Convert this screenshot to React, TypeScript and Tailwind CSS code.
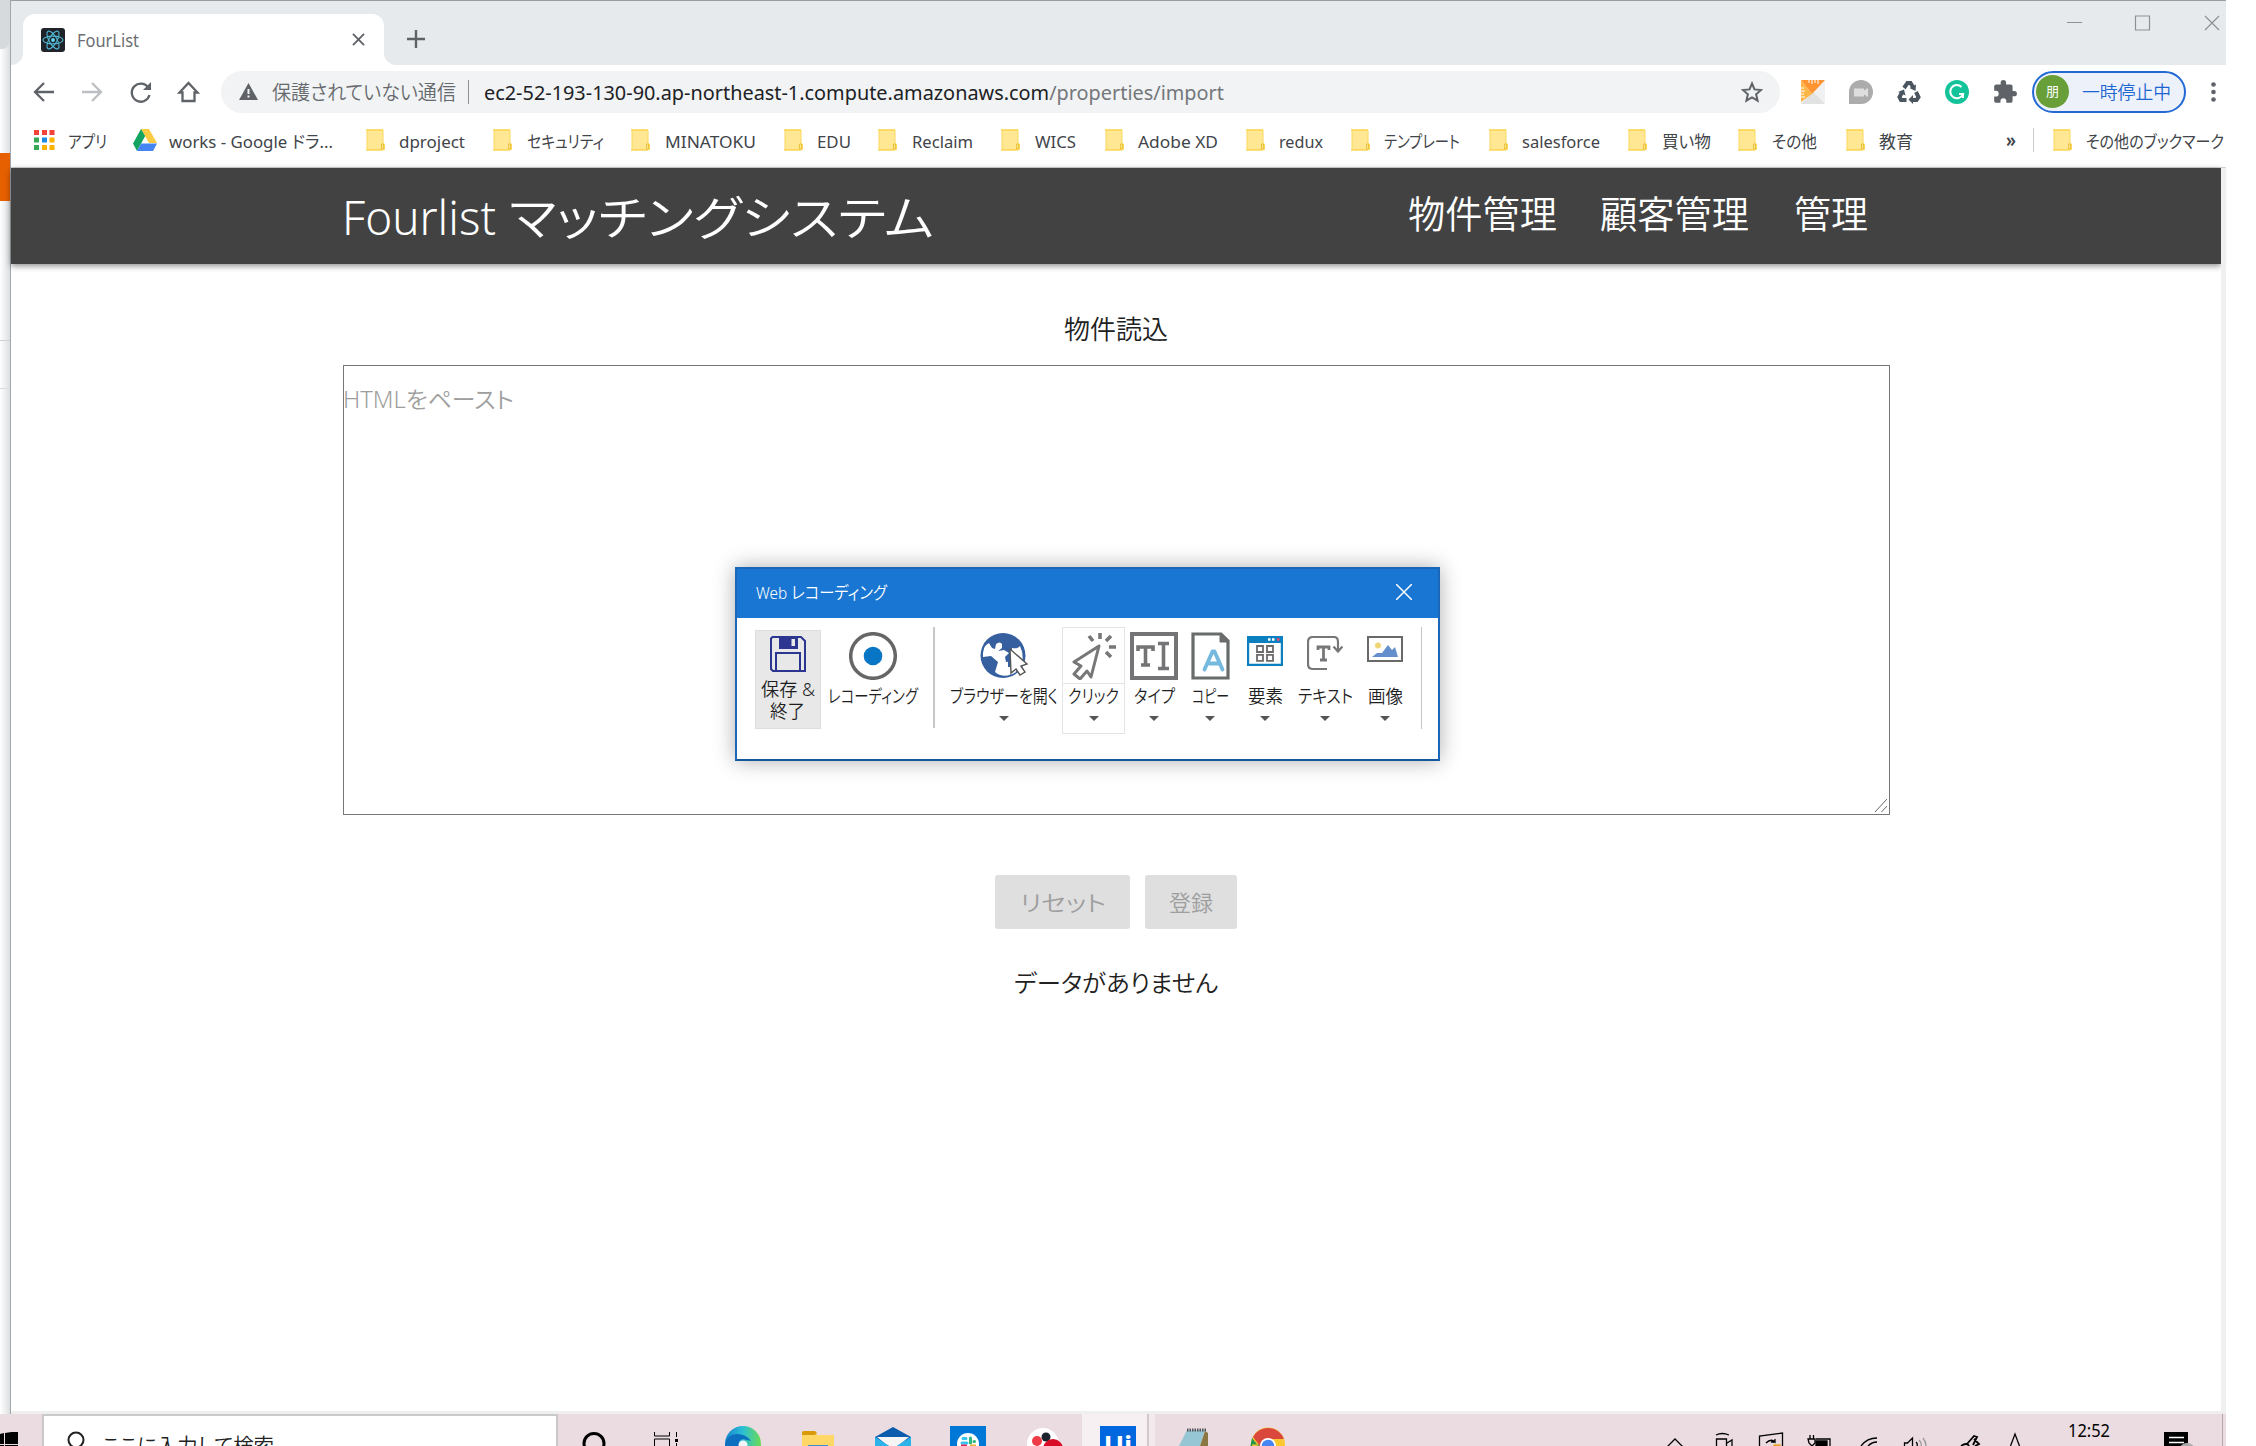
import React, { useLayoutEffect, useRef } from "react";

/* Text condensed or stretched to the width of its box. */
function T({ className = "", children }: { className?: string; children: React.ReactNode }) {
  const box = useRef<HTMLSpanElement>(null);
  const ink = useRef<HTMLSpanElement>(null);
  useLayoutEffect(() => {
    const b = box.current, i = ink.current;
    if (b && i && i.offsetWidth > 0) i.style.transform = `scaleX(${b.clientWidth / i.getBoundingClientRect().width})`;
  }, []);
  return (
    <span ref={box} className={`block shrink-0 whitespace-nowrap leading-none ${className}`}>
      <span ref={ink} className="inline-block origin-left">{children}</span>
    </span>
  );
}

const Folder = () => (
  <svg className="h-[22px] w-[19px] shrink-0" viewBox="0 0 19 22">
    <path d="M1 1h16v13l1.500 1v5.500h-17.500z" fill="#ffe793" stroke="#fbd85c" strokeWidth="1" />
    <path d="M0 1h17M0 21h17" stroke="#fbd85c" strokeWidth="1.500" />
    <path d="M15.500 20v-5h2v5z" fill="#ffe793" stroke="#ecc23c" strokeWidth="1" />
  </svg>
);

const bookmarks = [
  { label: "dproject", m: "ml-[33px]", w: "w-[66px]", g: "ml-[14px]" },
  { label: "セキュリティ", m: "ml-[28px]", w: "w-[77px]", g: "ml-[15px]" },
  { label: "MINATOKU", m: "ml-[27px]", w: "w-[91px]", g: "ml-[15px]" },
  { label: "EDU", m: "ml-[28px]", w: "w-[34px]", g: "ml-[14px]" },
  { label: "Reclaim", m: "ml-[27px]", w: "w-[61px]", g: "ml-[15px]" },
  { label: "WICS", m: "ml-[28px]", w: "w-[41px]", g: "ml-[15px]" },
  { label: "Adobe XD", m: "ml-[29px]", w: "w-[80px]", g: "ml-[14px]" },
  { label: "redux", m: "ml-[28px]", w: "w-[44px]", g: "ml-[14px]" },
  { label: "テンプレート", m: "ml-[28px]", w: "w-[76px]", g: "ml-[14px]" },
  { label: "salesforce", m: "ml-[29px]", w: "w-[78px]", g: "ml-[14px]" },
  { label: "買い物", m: "ml-[28px]", w: "w-[49px]", g: "ml-[15px]" },
  { label: "その他", m: "ml-[27px]", w: "w-[45px]", g: "ml-[15px]" },
  { label: "教育", m: "ml-[29px]", w: "w-[34px]", g: "ml-[14px]" },
];

function TabStrip() {
  return (
    <div className="flex h-[65px] border-t border-[#9a9da1] bg-[#e6eaed]">
      <div className="relative ml-3 mt-[13px] flex h-[51px] w-[361px] items-center rounded-t-[12px] bg-white">
        <svg className="absolute -left-3 bottom-0 h-3 w-3" viewBox="0 0 12 12"><path d="M12 0v12H0A12 12 0 0 0 12 0" fill="#fff" /></svg>
        <svg className="absolute -right-3 bottom-0 h-3 w-3" viewBox="0 0 12 12"><path d="M0 0v12h12A12 12 0 0 1 0 0" fill="#fff" /></svg>
        <svg className="ml-[18px] h-6 w-6" viewBox="0 0 24 24" fill="none" stroke="#4fb8d3" strokeWidth="1.100">
          <rect width="24" height="24" rx="3" fill="#20232a" stroke="none" />
          <ellipse cx="12" cy="12" rx="10" ry="3.900" />
          <ellipse cx="12" cy="12" rx="10" ry="3.900" transform="rotate(60 12 12)" />
          <ellipse cx="12" cy="12" rx="10" ry="3.900" transform="rotate(120 12 12)" />
          <circle cx="12" cy="12" r="1.900" fill="#61dafb" stroke="none" />
        </svg>
        <T className="ml-3 mt-[1px] w-[62px] text-[18px] text-[#6b6e72]">FourList</T>
        <svg className="ml-[213px] h-[13px] w-[13px]" viewBox="0 0 14 14" stroke="#5f6368" strokeWidth="2"><path d="M1 1l12 12M13 1L1 13" /></svg>
      </div>
      <svg className="ml-[23px] mt-[29px] h-[18px] w-[18px]" viewBox="0 0 18 18" stroke="#5f6368" strokeWidth="2.400"><path d="M9 0v18M0 9h18" /></svg>
      <svg className="ml-auto mt-[14px] h-4 w-[154px]" viewBox="0 0 154 16" fill="none" stroke="#8e9194" strokeWidth="1.200">
        <path d="M0 7.500h15M138 1l14 14M152 1l-14 14" /><path d="M68.500 1h14v14h-14z" />
      </svg>
      <div className="w-[5px]" />
    </div>
  );
}

function Toolbar() {
  return (
    <div className="flex h-[53px] items-center bg-white pl-[22px]">
      <svg className="h-6 w-[168px] shrink-0" viewBox="0 0 168 24" fill="none" strokeWidth="2.300">
        <path d="M21 12H2M11 3l-9 9 9 9" stroke="#5f6368" />
        <path d="M49 12h19M59 3l9 9-9 9" stroke="#bcbec1" />
        <path d="M115.500 8A9 9 0 1 0 116.500 15" stroke="#5f6368" />
        <path d="M118 2v8h-8z" fill="#5f6368" />
        <path d="M149.500 12.500h-3L155.500 3l9 9.500h-3V21h-12z" stroke="#5f6368" />
      </svg>
      <div className="ml-5 flex h-[42px] w-[1559px] shrink-0 items-center rounded-full bg-[#f1f3f4]">
        <svg className="ml-[18px] h-[17px] w-[19px]" viewBox="0 0 19 17"><path d="M9.500 0L19 17H0z" fill="#5f6368" /><path d="M9.500 6v5M9.500 12.500v2" stroke="#f1f3f4" strokeWidth="2" /></svg>
        <T className="ml-[14px] mt-[2px] w-[184px] text-[20px] font-[350] text-[#66696d]">保護されていない通信</T>
        <div className="ml-[12px] h-6 w-px bg-[#8d9195]" />
        <T className="ml-[15px] mt-[2px] w-[740px] text-[20px] text-[#202124]">ec2-52-193-130-90.ap-northeast-1.compute.amazonaws.com<span className="text-[#74777b]">/properties/import</span></T>
        <svg className="ml-[517px] h-[22px] w-[22px]" viewBox="0 0 22 22" fill="none" stroke="#5f6368" strokeWidth="2"><path d="M11 2.500l2.500 5.900 6.500.6-4.900 4.300 1.500 6.300L11 16.300l-5.600 3.300 1.500-6.300L2 9l6.500-.6z" /></svg>
      </div>
      <svg className="ml-[21px] h-6 w-6 shrink-0" viewBox="0 0 24 24">
        <path d="M2 0h20l2 2v20l-2 2H0V2z" fill="#f1f1f1" /><path d="M12 12L24 24H0z" fill="#e2e2e2" />
        <path d="M0 0h24L11 14z" fill="#ff9431" /><path d="M0 0l11 14L0 22z" fill="#ffb649" />
        <path d="M8 0v3M11 0v4M14 0v3M17 0v4M0 8h3M0 11h4M0 14h3M0 17h4" stroke="#fff" />
      </svg>
      <svg className="ml-6 h-6 w-6 shrink-0" viewBox="0 0 24 24"><path d="M12 0a12 12 0 1 1 0 24H0V12A12 12 0 0 1 12 0" fill="#acacac" /><path d="M5 8.500h10v2l4-2.500v9l-4-2.500v2H5z" fill="#dedede" /></svg>
      <svg className="ml-6 h-6 w-6 shrink-0" viewBox="0 0 24 24" fill="none" stroke="#4b5560" strokeWidth="4">
        <path d="M7 8l3.500-5h3L16 7" /><path d="M19 12l2.500 5-2 3h-5" /><path d="M9.500 20H4l-1.500-3L5 12.500" />
        <path d="M19 4.500L18.500 11 12.500 8z M16 15v9l-4.500-4.500z M1 12l6-2.500 1.500 6z" fill="#4b5560" stroke="none" />
      </svg>
      <svg className="ml-6 h-6 w-6 shrink-0" viewBox="0 0 24 24" fill="none"><circle cx="12" cy="12" r="12" fill="#15c39a" /><path d="M16.500 7A6.600 6.600 0 1 0 18 14h-4M18 13.500V18" stroke="#fff" strokeWidth="2" /></svg>
      <svg className="ml-[23px] h-[26px] w-[26px] shrink-0" viewBox="0 0 24 24" fill="#5f6368"><path d="M20.500 11H19V7a2 2 0 0 0-2-2h-4V3.500a2.500 2.500 0 0 0-5 0V5H4a2 2 0 0 0-2 2v3.800h1.500a2.700 2.700 0 0 1 0 5.400H2V20a2 2 0 0 0 2 2h3.800v-1.500a2.700 2.700 0 0 1 5.400 0V22H17a2 2 0 0 0 2-2v-4h1.500a2.500 2.500 0 0 0 0-5" /></svg>
      <div className="ml-[14px] flex h-[42px] w-[154px] shrink-0 items-center rounded-full border-2 border-[#2369d4] bg-[#edf1fa]">
        <div className="ml-[2px] flex h-[33px] w-[33px] items-center justify-center rounded-full bg-[#689f38] text-[13px] leading-none text-white">朋</div>
        <T className="ml-[13px] mt-px w-[89px] text-[18px] font-[350] text-[#1b66d0]">一時停止中</T>
      </div>
      <svg className="ml-[25px] h-5 w-[5px] shrink-0" viewBox="0 0 5 20" fill="#5f6368"><circle cx="2.500" cy="2.500" r="2.300" /><circle cx="2.500" cy="10" r="2.300" /><circle cx="2.500" cy="17.500" r="2.300" /></svg>
    </div>
  );
}

function Bookmarks() {
  return (
    <div className="flex h-[50px] items-center border-b border-[#d4d6d8] bg-white pb-[5px] pl-[23px] text-[17px] text-[#414449]">
      <svg className="h-5 w-[21px] shrink-0" viewBox="0 0 21 20">
        <path d="M0 0h5v5H0zM8 0h5v5H8zM15.500 0h5v5h-5z" fill="#f44336" />
        <path d="M0 7.500h5v5H0z" fill="#34a853" /><path d="M8 7.500h5v5H8z" fill="#1e88e5" /><path d="M15.500 7.500h5v5h-5zM8 15h5v5H8zM15.500 15h5v5h-5z" fill="#fbb300" />
        <path d="M0 15h5v5H0z" fill="#34a853" />
      </svg>
      <T className="ml-[13px] mt-[3px] w-[39px]">アプリ</T>
      <svg className="ml-[26px] h-[22px] w-6 shrink-0" viewBox="0 0 24 22"><path d="M8 0h8l8 14h-8z" fill="#fbcb44" /><path d="M8 0l4.200 7L4 22 0 14.500z" fill="#12a460" /><path d="M8.200 14.500H24L20 22H4z" fill="#4584f3" /></svg>
      <T className="ml-[12px] mt-[3px] w-[164px]">works - Google ドラ...</T>
      {bookmarks.map((b) => (
        <div key={b.label} className={`flex items-center ${b.m}`}>
          <Folder />
          <T className={`mt-[3px] ${b.g} ${b.w}`}>{b.label}</T>
        </div>
      ))}
      <T className="ml-auto w-[10px] text-[20px] font-semibold">»</T>
      <div className="ml-[17px] h-6 w-px bg-[#c9cbce]" />
      <div className="ml-[19px] flex items-center"><Folder /><T className="ml-[14px] mr-[2px] mt-[3px] w-[138px]">その他のブックマーク</T></div>
    </div>
  );
}

function ToolButton({ box, label, text, children, arrow = true }: { box: string; label: string; text: string; children: React.ReactNode; arrow?: boolean }) {
  return (
    <div className={`flex shrink-0 flex-col items-center pt-[14px] ${box}`}>
      <div className="flex h-12 items-start justify-center">{children}</div>
      <T className={`mt-[7px] text-[18px] ${label}`}>{text}</T>
      {arrow && <svg className="mt-[11px] h-[5px] w-[10px]" viewBox="0 0 10 5"><path d="M0 0h10L5 5z" fill="#555" /></svg>}
    </div>
  );
}

function Recorder() {
  return (
    <section className="absolute left-[724px] top-[399px] flex h-[194px] w-[705px] flex-col border-2 border-[#1a66b8] border-b-[#15569c] bg-white font-[350] text-[#1f1f1f] shadow-[0_0_20px_rgba(0,0,0,0.32)]">
      <div className="flex h-[49px] shrink-0 items-center bg-[#1976d2] pb-[3px]">
        <T className="ml-[19px] w-[131px] text-[17px] text-white">Web レコーディング</T>
        <svg className="ml-auto mr-[26px] h-4 w-4" viewBox="0 0 16 16" stroke="#fff" strokeWidth="1.500"><path d="M0 0l16 16M16 0L0 16" /></svg>
      </div>
      <div className="flex items-start">
        <div className="ml-[18px] mt-[12px] flex h-[99px] w-[66px] shrink-0 flex-col items-center border border-[#dedede] bg-[#e8e8e8] pr-px pt-[5px]">
          <svg className="h-9 w-9" viewBox="0 0 36 36" fill="none" stroke="#2c3691" strokeWidth="2">
            <path d="M2.500 1H31l4 4v30H3l-2-2V2.500z" /><path d="M10 1h17v11H10z" fill="#2c3691" /><path d="M21.500 3h3.500v7h-3.500z" fill="#e8e8e8" stroke="none" /><path d="M6 35V17h24v18" />
          </svg>
          <T className="mt-[8px] w-[54px] text-[18px]">保存 &amp;</T>
          <T className="mt-[4px] w-[35px] text-[18px]">終了</T>
        </div>
        <ToolButton box="ml-[6px] w-[92px]" label="w-[90px]" text="レコーディング" arrow={false}>
          <svg className="h-12 w-12" viewBox="0 0 48 48"><circle cx="24" cy="24" r="22.300" fill="none" stroke="#666" strokeWidth="3.500" /><circle cx="24" cy="24" r="9.300" fill="#0876c4" /></svg>
        </ToolButton>
        <div className="ml-[14px] mt-[9px] h-[101px] w-[2px] bg-[#c8c8c8]" />
        <ToolButton box="ml-[13px] w-[112px]" label="w-[108px]" text="ブラウザーを開く">
          <svg className="h-12 w-[50px]" viewBox="0 0 50 48">
            <circle cx="24" cy="23.500" r="22.500" fill="#355f9f" />
            <path d="M4 21q1-8 6-10l3 5 3 1 1-5q4-3 6 0v4l-4 3 6-1 5 3-4 4 1 5 8-1 1 12-8 3q-8 0-12-4l3-10-7-6-8 1z" fill="#fff" />
            <path d="M33 16q6 1 8-2 4 8 2 18l-7 9-4-4z" fill="#fff" />
            <path d="M29 22h4v13h-4z" fill="#355f9f" />
            <path d="M4 30l5 9q14 11 29 0l3-4q-6 9-17 9T4 30" fill="#355f9f" />
            <path d="M31 17l1 24 5-4 4 6 5-3-4-6 6-2z" fill="#fff" stroke="#555" strokeWidth="1.400" />
          </svg>
        </ToolButton>
        <div className="relative ml-[2px] mt-[9px] h-[107px] w-[63px] shrink-0 border border-[#e4e4e4]">
          <div className="absolute left-0 top-[55px] h-px w-full bg-[#e4e4e4]" />
          <ToolButton box="-mt-[10px] w-[61px]" label="w-[51px]" text="クリック">
            <svg className="h-12 w-[46px]" viewBox="0 0 46 48" fill="none" stroke="#777" strokeWidth="3">
              <path d="M28 14L3 30l7 4-7 8 6 5 7-8 4 6z" strokeLinejoin="round" /><path d="M29 1v6M18 4l4 5M40 4l-5 5M38 15h7M35 20l5 5" strokeWidth="3.600" />
            </svg>
          </ToolButton>
        </div>
        <ToolButton box="ml-[5px] w-[48px]" label="w-[41px]" text="タイプ">
          <svg className="h-12 w-12" viewBox="0 0 48 48" fill="none" stroke="#747477">
            <path d="M2 2h44v44H2z" strokeWidth="4" /><path d="M8 19v-4h15v4M15.500 15v18M11 33h9M28 11.500h11M28 36.500h11M33.500 12v24" strokeWidth="3.600" />
          </svg>
        </ToolButton>
        <ToolButton box="ml-[12px] w-[40px]" label="w-[37px]" text="コピー">
          <svg className="h-12 w-[39px]" viewBox="0 0 39 48" fill="none" stroke="#686c6a" strokeWidth="3.200">
            <path d="M2 2h28l7 7v37H2z" /><path d="M29 1v9h9z" fill="#686c6a" strokeWidth="1" />
            <path d="M13.500 37.500l8-18h2l8 18M17 31.500h11" stroke="#75b9df" strokeWidth="3.800" strokeLinecap="round" strokeLinejoin="round" />
          </svg>
        </ToolButton>
        <ToolButton box="ml-[15px] w-[40px]" label="w-[35px]" text="要素">
          <svg className="mt-1 h-[30px] w-9" viewBox="0 0 36 30" fill="none">
            <path d="M1 1h34v28H1z" fill="#fff" stroke="#0c80bf" strokeWidth="2.400" /><path d="M0 0h36v7H0z" fill="#0c80bf" />
            <path d="M21 3.500h2.500M25 3.500h2.500" stroke="#fff" strokeWidth="2.500" /><path d="M30 3.500h2.500" stroke="#f2486a" strokeWidth="2.500" />
            <path d="M10 10h6v6h-6zM20 10h6v6h-6zM10 18.800h6v6h-6zM20 18.800h6v6h-6z" stroke="#6a6a6a" strokeWidth="1.800" />
          </svg>
        </ToolButton>
        <ToolButton box="ml-[10px] w-[60px]" label="w-[55px]" text="テキスト">
          <svg className="mt-1 h-[35px] w-9" viewBox="0 0 36 35" fill="none" stroke="#77777a" strokeWidth="2.200">
            <path d="M20 33H6q-5 0-5-5V6q0-5 5-5h21q4 0 4 5v9M26.500 10.500l4.500 5 4.500-5" /><path d="M11 14v-3h11v3M16.500 11v13M13 24h7" strokeWidth="2.800" />
          </svg>
        </ToolButton>
        <ToolButton box="w-[60px]" label="w-[35px]" text="画像">
          <svg className="mt-1 h-[26px] w-9" viewBox="0 0 36 26"><path d="M1 1h34v24H1z" fill="#fff" stroke="#696969" strokeWidth="2" /><circle cx="11" cy="9.500" r="3" fill="#efd675" /><path d="M5 21l5-4h5l6-8 4 5 3-3 3 10z" fill="#648fcc" /></svg>
        </ToolButton>
        <div className="ml-[6px] mt-[9px] h-[102px] w-px bg-[#c4c4c4]" />
      </div>
    </section>
  );
}

function Page() {
  return (
    <main className="relative flex h-[1246px] border-b-[3px] border-[#efefef] bg-white font-[350]">
      <div className="flex w-[2210px] flex-col">
        <header className="flex h-[96px] shrink-0 items-center bg-[#424242] text-white shadow-[0_2px_6px_rgba(0,0,0,0.45)]">
          <h1 className="ml-[331px] mt-[3px] flex text-[47px]">
            <T className="w-[154px]">Fourlist</T>
            <T className="ml-[13px] w-[425px]">マッチングシステム</T>
          </h1>
          <nav className="-mt-[7px] ml-[474px] flex text-[38px]">
            <T className="w-[149px]">物件管理</T>
            <T className="ml-[43px] w-[149px]">顧客管理</T>
            <T className="ml-[45px] w-[74px]">管理</T>
          </nav>
        </header>
        <div className="flex flex-col items-center text-[#212121]">
          <T className="mt-[52px] w-[104px] text-[26px]">物件読込</T>
          <div className="relative ml-px mt-[23px] h-[450px] w-[1547px] border border-[#767676] pt-[22px]">
            <T className="-ml-px w-[171px] text-[23px] text-[#9e9e9e]">HTMLをペースト</T>
            <svg className="absolute bottom-[2px] right-[2px] h-[13px] w-3" viewBox="0 0 12 13" stroke="#666"><path d="M0 13L12 0M6.500 13L12 7" /></svg>
          </div>
          <div className="mt-[60px] flex gap-[15px] text-[22px] text-[#9e9e9e]">
            <div className="flex h-[54px] w-[135px] items-center justify-center rounded-[3px] bg-[#dfdfdf]"><T className="w-[86px]">リセット</T></div>
            <div className="flex h-[54px] w-[92px] items-center justify-center rounded-[3px] bg-[#dfdfdf]"><T className="w-[44px]">登録</T></div>
          </div>
          <T className="mt-[42px] w-[204px] text-[24px]">データがありません</T>
        </div>
      </div>
      <div className="w-[5px] bg-[#f0f0f0]" />
      <Recorder />
    </main>
  );
}

function Taskbar() {
  return (
    <footer className="flex h-[32px] w-[2226px] overflow-hidden bg-[#eadce0]">
      <svg className="mt-[18px] h-[14px] w-[42px] shrink-0" viewBox="0 0 42 14"><path d="M0 2v10h4V1zM5 1l13-2v13H5zM0 13h4v3H0zM5 13h13v3H5z" fill="#000" /></svg>
      <div className="flex h-[60px] w-[516px] shrink-0 border-2 border-[#c9c9c9] bg-white">
        <svg className="ml-[22px] mt-[15px] h-[26px] w-5" viewBox="0 0 20 26" fill="none" stroke="#222" strokeWidth="2"><circle cx="10" cy="9" r="7.500" /><path d="M5 15l-6 7" /></svg>
        <T className="ml-[16px] mt-[18px] w-[172px] text-[22px] font-[350] text-[#222]">ここに入力して検索</T>
      </div>
      <svg className="h-8 w-[524px] shrink-0" viewBox="558 0 524 32">
        <circle cx="594" cy="29.500" r="10" fill="none" stroke="#000" strokeWidth="3" />
        <path d="M654.500 18v4h15v-4M654.500 32v-7h15v7M676.500 18v5M676.500 29v3" fill="none" stroke="#000" /><path d="M675 25h3v3h-3z" />
        <defs>
          <linearGradient id="edge"><stop offset="0" stopColor="#1685cf" /><stop offset=".5" stopColor="#2cbfd4" /><stop offset="1" stopColor="#6bdc52" /></linearGradient>
        </defs>
        <circle cx="743" cy="30" r="18" fill="url(#edge)" /><path d="M725 30q2-10 12-10 9 0 14 7l-8-2q-5 1-4 7h-14z" fill="#0d6fbf" /><circle cx="743" cy="31" r="4.500" fill="#f1f6fb" />
        <path d="M802 19q0-2 2-2h11l2 4h17v12h-32z" fill="#ffd766" /><path d="M802 21v-2q0-2 2-2h11l2 2-2 2z" fill="#d99b0c" /><path d="M808 31h20v2h-20z" fill="#3f8fd2" />
        <path d="M875 23l18-10 18 10v10h-36z" fill="#0c5cae" /><path d="M877 23h32l-16 13z" fill="#f5f5f5" /><path d="M875 23l16 10h-16zM911 23l-16 10h16z" fill="#2cb4ea" />
        <path d="M950 12h36v22h-36z" fill="#0078d8" /><circle cx="968" cy="30" r="11" fill="#fff" />
        <path d="M963 24.500h3M962 29h5" stroke="#36c5f0" strokeWidth="3" strokeLinecap="round" /><path d="M970.500 24v5M974 27.500h.5" stroke="#2eb67d" strokeWidth="3" strokeLinecap="round" /><path d="M961 32h6" stroke="#e01e5a" strokeWidth="3" /><path d="M970 32h6" stroke="#ecb22e" strokeWidth="3" />
        <circle cx="1043" cy="30" r="16" fill="#fff" /><circle cx="1037" cy="27" r="5" fill="#ef3a47" /><circle cx="1046" cy="23" r="4.500" fill="#1c2430" /><circle cx="1053" cy="35" r="10" fill="#d80b26" />
      </svg>
      <div className="flex w-[67px] shrink-0 border-r-2 border-[#d3c8cb] bg-[#f7f0f2] pl-[18px]">
        <div className="mt-[12px] flex h-[36px] w-[36px] items-start justify-center bg-[#0067df] pt-[5px] font-['Open_Sans'] text-[27px] font-bold leading-none text-white">Ui</div>
      </div>
      <div className="w-[6px] shrink-0 bg-[#f3eaed]" />
      <svg className="h-8 w-[140px] shrink-0" viewBox="1155 0 140 32">
        <path d="M1187 16h18l-5 16h-21z" fill="#96c5d3" /><path d="M1205 17l3 2v13h-8z" fill="#8b7742" /><path d="M1187 16h19" stroke="#555" strokeWidth="3" strokeDasharray="1.500 1" />
        <circle cx="1268" cy="30.500" r="17" fill="#fbc72f" /><path d="M1268 30.500h-17l2-7-1 9z M1252 24l8 10h-10z" fill="#279847" /><path d="M1253 23a17 17 0 0 1 31 2h-16l-8 7z" fill="#da483d" /><circle cx="1268" cy="32" r="8" fill="#fff" /><circle cx="1268" cy="32" r="6.200" fill="#4686f2" />
      </svg>
      <svg className="ml-[365px] h-8 w-[370px] shrink-0" viewBox="1660 0 370 32" fill="none" stroke="#000" strokeWidth="1.300">
        <path d="M1667 33l8-8 8 8" /><path d="M1716.500 32v-7h10v7M1727 29l5-3v6M1716 21q6-3 13 0" />
        <path d="M1759.500 32V22l23-3v13M1766 29q5-5 9-1v-3M1775 28h-4" /><path d="M1774 31h6v1h-6z" fill="#e8a21c" stroke="#e8a21c" />
        <path d="M1816 25h14v7M1808 25h7v4l-3 3-3-3zM1810 25v-4M1813.500 25v-4" /><path d="M1816 27h11v5h-11z" fill="#000" />
        <path d="M1861 32q6-8 16-8M1868 32q4-4 9-4" /><path d="M1904.500 32v-3h3l5-5v8M1916 28q2 2 1 4" /><path d="M1919 26q3 3 2 6M1923 24q3 4 3 8" stroke="#999" />
        <path d="M1961 32q6-4 8 0M1967 30l7-8 3 1-4 8M1974 25l5 5-4 2" strokeWidth="1.800" /><path d="M2010.500 32l4.500-12 4.500 12" />
      </svg>
      <T className="ml-[38px] mt-[7px] w-[42px] text-[18px] text-black">12:52</T>
      <svg className="ml-[54px] h-8 w-[34px] shrink-0" viewBox="2164 0 34 32"><path d="M2164 18h24v14h-24z" /><path d="M2169 23.500h15M2169 28.500h15" stroke="#fff" strokeWidth="1.500" /><circle cx="2187" cy="37" r="8" fill="#aaa" /></svg>
      <div className="ml-auto mr-[3px] w-px shrink-0 bg-[#b5a8ac]" />
    </footer>
  );
}

export default function App() {
  return (
    <div className="h-[1446px] w-[2256px] overflow-hidden bg-white font-['Noto_Sans','Noto_Sans_CJK_JP',sans-serif] [font-feature-settings:'palt']">
      <div className="flex h-[1414px] w-[2226px]">
        <div className="flex w-[11px] shrink-0 flex-col border-r border-[#a3a6a9] bg-gradient-to-r from-white to-[#dcdfe1]">
          <div className="h-[49px] rounded-br-[8px] bg-[#d6dadd]" />
          <div className="mt-[104px] h-[48px] bg-[#e66000]" />
          <div className="mt-[139px] h-px bg-[#d0d0d0]" />
          <div className="mt-[47px] h-px bg-[#dddddd]" />
        </div>
        <div className="flex w-[2215px] flex-col">
          <TabStrip />
          <Toolbar />
          <Bookmarks />
          <Page />
        </div>
      </div>
      <Taskbar />
    </div>
  );
}
